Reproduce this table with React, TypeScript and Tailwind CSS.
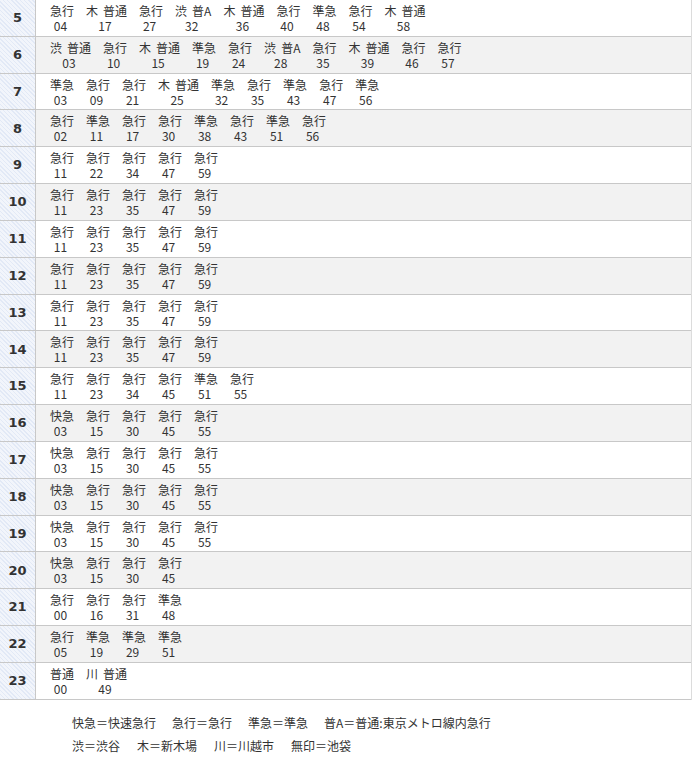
import React from "react";

type Train = { t: string; p?: string; m: string };

// p = 行先の略号 (渋/木/川), t = 種別, m = 分
const k = (m: string): Train => ({ t: "急行", m });
const j = (m: string): Train => ({ t: "準急", m });
const q = (m: string): Train => ({ t: "快急", m });
const f = (p: string, t: string, m: string): Train => ({ p, t, m });

const ROWS: { h: number; trains: Train[] }[] = [
  { h: 5, trains: [k("04"), f("木", "普通", "17"), k("27"), f("渋", "普A", "32"), f("木", "普通", "36"), k("40"), j("48"), k("54"), f("木", "普通", "58")] },
  { h: 6, trains: [f("渋", "普通", "03"), k("10"), f("木", "普通", "15"), j("19"), k("24"), f("渋", "普A", "28"), k("35"), f("木", "普通", "39"), k("46"), k("57")] },
  { h: 7, trains: [j("03"), k("09"), k("21"), f("木", "普通", "25"), j("32"), k("35"), j("43"), k("47"), j("56")] },
  { h: 8, trains: [k("02"), j("11"), k("17"), k("30"), j("38"), k("43"), j("51"), k("56")] },
  { h: 9, trains: ["11", "22", "34", "47", "59"].map(k) },
  { h: 10, trains: ["11", "23", "35", "47", "59"].map(k) },
  { h: 11, trains: ["11", "23", "35", "47", "59"].map(k) },
  { h: 12, trains: ["11", "23", "35", "47", "59"].map(k) },
  { h: 13, trains: ["11", "23", "35", "47", "59"].map(k) },
  { h: 14, trains: ["11", "23", "35", "47", "59"].map(k) },
  { h: 15, trains: [k("11"), k("23"), k("34"), k("45"), j("51"), k("55")] },
  { h: 16, trains: [q("03"), k("15"), k("30"), k("45"), k("55")] },
  { h: 17, trains: [q("03"), k("15"), k("30"), k("45"), k("55")] },
  { h: 18, trains: [q("03"), k("15"), k("30"), k("45"), k("55")] },
  { h: 19, trains: [q("03"), k("15"), k("30"), k("45"), k("55")] },
  { h: 20, trains: [q("03"), k("15"), k("30"), k("45")] },
  { h: 21, trains: [k("00"), k("16"), k("31"), j("48")] },
  { h: 22, trains: [k("05"), j("19"), j("29"), j("51")] },
  { h: 23, trains: [f("", "普通", "00"), f("川", "普通", "49")] },
];

function Entry({ train }: { train: Train }) {
  return (
    <div className="mr-[12px] flex flex-col items-center leading-[15px]">
      <div className="flex gap-[5px] whitespace-nowrap">
        {train.p ? <span>{train.p}</span> : null}
        <span>{train.t}</span>
      </div>
      <div className="pr-[3px]">{train.m}</div>
    </div>
  );
}

export default function App() {
  return (
    <div className="min-h-[762px] w-[695px] bg-white font-['Noto_Sans_CJK_JP',sans-serif] text-[12px] text-[#333]">
      <div className="w-[692px] border-r border-[#dcdcdc]">
        {ROWS.map((row) => (
          <div
            key={row.h}
            className={`flex h-[36.83px] border-b border-[#c8c8c8] ${row.h % 2 === 0 ? "bg-[#f2f2f2]" : "bg-white"}`}
          >
            <div className="flex w-[36px] shrink-0 items-center justify-center border-r border-[#c8c8c8] bg-[repeating-linear-gradient(45deg,#e2e9f6_0px,#e2e9f6_1px,#f2f5fb_1px,#f2f5fb_3px)] font-['DejaVu_Sans',sans-serif] text-[13px] font-bold text-[#333]">
              {row.h}
            </div>
            <div className="flex items-center pl-[14px]">
              {row.trains.map((t, i) => (
                <Entry key={i} train={t} />
              ))}
            </div>
          </div>
        ))}
      </div>

      {/* 凡例 */}
      <div className="mt-[11px] pl-[72px] leading-[23px]">
        <div className="flex gap-[16px] whitespace-nowrap">
          <span>快急＝快速急行</span>
          <span>急行＝急行</span>
          <span>準急＝準急</span>
          <span>普A＝普通:東京メトロ線内急行</span>
        </div>
        <div className="flex gap-[17px] whitespace-nowrap">
          <span>渋＝渋谷</span>
          <span>木＝新木場</span>
          <span>川＝川越市</span>
          <span>無印＝池袋</span>
        </div>
      </div>
    </div>
  );
}
